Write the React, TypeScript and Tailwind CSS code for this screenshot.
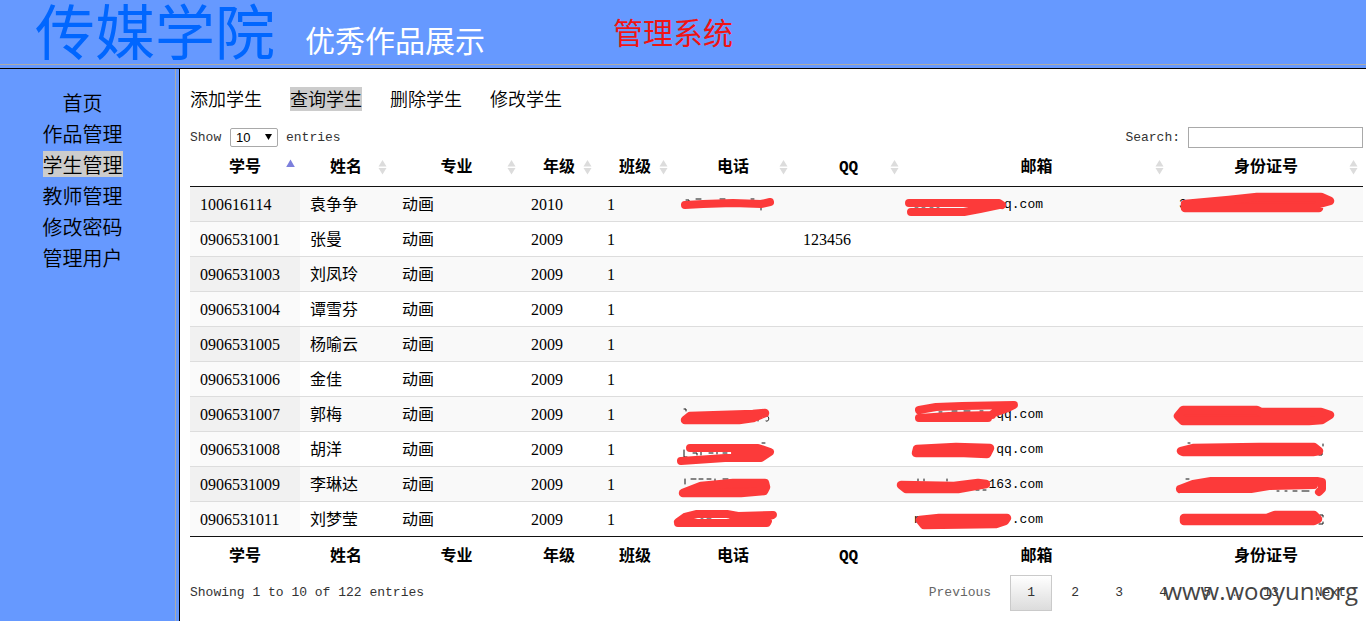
import React from "react";

type Mark = { fill?: string; lines?: string; ticks?: string; lead?: string; tail?: string };

type Student = {
  id: string;
  name: string;
  major: string;
  grade: string;
  cls: string;
  qq?: string;
  phone?: Mark;
  mail?: Mark;
  card?: Mark;
};

const students: Student[] = [
  {
    id: "100616114", name: "袁争争", major: "动画", grade: "2010", cls: "1",
    phone: { lines: "M12 18 L30 17 L60 16 L88 17 L97 15", ticks: "M13 13h3v2 M23 12h5 M47 12h5 M78 12h3 M88 20v3" },
    mail: {
      lines: "M5 16 L95 16 L98 18 M7 25 L60 25 L76 22 L95 18",
      ticks: "M11 20h3 M18 20h3 M26 20h3 M33 20h2",
      tail: "q.com",
    },
    card: { fill: "M16 17 L60 13 L88 10 L152 10 L161 14 L150 17 L150 21 L16 21 Z", lead: "3" },
  },
  { id: "0906531001", name: "张曼", major: "动画", grade: "2009", cls: "1", qq: "123456" },
  { id: "0906531003", name: "刘凤玲", major: "动画", grade: "2009", cls: "1" },
  { id: "0906531004", name: "谭雪芬", major: "动画", grade: "2009", cls: "1" },
  { id: "0906531005", name: "杨喻云", major: "动画", grade: "2009", cls: "1" },
  { id: "0906531006", name: "金佳", major: "动画", grade: "2009", cls: "1" },
  {
    id: "0906531007", name: "郭梅", major: "动画", grade: "2009", cls: "1",
    phone: { fill: "M12 23 L17 19 L80 17 L92 16 L80 21 L66 23 Z", ticks: "M11 12h2v2 M85 23v1 M91 19c6-3 6 7 2 5" },
    mail: {
      lines: "M15 13 L32 10 L58 9 L110 8 L104 11 L90 16 L84 20 M15 21 L45 19 L88 18 M15 21 L84 21",
      ticks: "M35 15h3 M48 14h5 M60 14h6 M76 14h3",
      tail: "qq.com",
    },
    card: { fill: "M14 13 L88 13 L92 15 L152 15 L161 18 L153 23 L140 24 L14 24 L9 19 Z" },
  },
  {
    id: "0906531008", name: "胡洋", major: "动画", grade: "2009", cls: "1",
    phone: {
      lines: "M17 16 L85 16 L97 20 L88 26 L52 26 L8 29 M62 21 L92 21",
      ticks: "M11 18v7h3 M20 21h4v2 M28 20v3 M36 21h4 M44 20v2 M50 21h4 M89 11h3",
    },
    mail: { fill: "M13 17 L12 21 L60 21 L83 22 L86 16 L52 15 Z", tail: "qq.com" },
    card: { fill: "M12 19 L24 16 L90 15 L145 15 L150 19 L144 20 L14 20 Z", ticks: "M19 11h2 M154 12v2 M150 23h3v-2" },
  },
  {
    id: "0906531009", name: "李琳达", major: "动画", grade: "2009", cls: "1",
    phone: { fill: "M10 26 L28 19 L60 16 L92 16 L93 20 L91 24 L68 26 Z", ticks: "M12 12v5 M18 12h5 M26 12h4 M34 12h4 M42 12v3 M50 12h5" },
    mail: { fill: "M-3 18 L50 19 L74 16 L82 17 L54 22 L2 22 Z", ticks: "M14 12v2 M20 12v2 M43 12v2 M62 23h4 M72 23h3 M79 23h3", tail: "163.com" },
    card: {
      lines: "M11 22 L24 17 L42 14 L148 14 L153 15 L153 22 L150 25 M11 22 L82 22 L100 19 L145 18",
      ticks: "M17 12h3 M42 18h3 M50 18h3 M65 18h5 M73 18h4 M108 24h2 M116 24h2 M124 24h4 M133 24h7",
    },
  },
  {
    id: "0906531011", name: "刘梦莹", major: "动画", grade: "2009", cls: "1",
    phone: { lines: "M5 20 L12 15 L24 12 L54 12 L65 14 L100 13 L88 17 L64 18 L95 19 L94 21 L5 21 M60 17 L92 17", ticks: "M28 17h2 M34 17h4" },
    mail: { fill: "M16 18 L35 16 L103 16 L101 19 L92 22 L20 23 Z", lead: "n", tail: ".com" },
    card: { fill: "M15 16 L98 16 L106 13 L145 13 L149 17 L145 19 L15 19 Z", ticks: "M151 13h3v2 M150 22h4v-2" },
  },
];

const columns = [
  { label: "学号", width: "w-[110px]" },
  { label: "姓名", width: "w-[92px]" },
  { label: "专业", width: "w-[129px]" },
  { label: "年级", width: "w-[76px]" },
  { label: "班级", width: "w-[76px]" },
  { label: "电话", width: "w-[120px]" },
  { label: "QQ", width: "w-[111px]" },
  { label: "邮箱", width: "w-[265px]" },
  { label: "身份证号", width: "w-[194px]" },
];

const sideLinks = ["首页", "作品管理", "学生管理", "教师管理", "修改密码", "管理用户"];
const tabs = ["添加学生", "查询学生", "删除学生", "修改学生"];

function SortIcon({ active }: { active: boolean }) {
  return (
    <svg className="absolute right-[5px] top-[11px]" width="9" height="16" viewBox="0 0 9 16" aria-hidden="true">
      {active ? (
        <path d="M4.5 0.5 L8.8 8 H0.2 Z" fill="#7c7fdc" />
      ) : (
        <path d="M4.5 1 L8.5 7.5 H0.5 Z M0.5 9 H8.5 L4.5 15.5 Z" fill="#dcdcdc" />
      )}
    </svg>
  );
}

function Covered({ mark }: { mark?: Mark }) {
  if (!mark) return null;
  return (
    <>
      <span className="flex w-[129px] justify-between font-['Liberation_Mono',monospace] text-[13px]">
        <span>{mark.lead}</span>
        <span>{mark.tail}</span>
      </span>
      <svg className="absolute left-0 top-0 overflow-visible" width="120" height="34" strokeLinecap="round" strokeLinejoin="round" aria-hidden="true">
        {mark.ticks && <path d={mark.ticks} fill="none" stroke="#111" strokeWidth="1" />}
        {mark.fill && <path d={mark.fill} fill="#fc3a3a" stroke="#fc3a3a" strokeWidth="8.5" />}
        {mark.lines && <path d={mark.lines} fill="none" stroke="#fc3a3a" strokeWidth="8" />}
      </svg>
    </>
  );
}

function PageButton({ label, current, muted }: { label: string; current?: boolean; muted?: boolean }) {
  const look = current
    ? "border-[#cacaca] bg-linear-to-b from-white to-[#dcdcdc] text-[#333]"
    : muted
      ? "border-transparent text-[#666]"
      : "border-transparent text-[#333]";
  return (
    <button type="button" className={`h-9 min-w-[42px] border px-4 ${look}`}>
      {label}
    </button>
  );
}

export default function App() {
  return (
    <div className="relative flex min-h-screen flex-col bg-white font-['Liberation_Serif','Noto_Sans_CJK_SC',serif] text-base leading-[18px] text-black">
      <header className="border-b border-black bg-[#6699ff] pb-[3px] font-['Noto_Sans_CJK_SC',sans-serif]">
        <div className="flex h-[65px] items-start border-b border-[#aaa] pl-[35px]">
          <h1 className="text-[60px] leading-[58px] text-[#0066ff]">传媒学院</h1>
          <span className="ml-[30px] pt-6 text-[30px] leading-[30px] text-white">优秀作品展示</span>
          <span className="ml-32 pt-4 text-[30px] leading-[30px] text-[#f01414]">管理系统</span>
        </div>
      </header>

      <div className="flex flex-1">
        <aside className="flex w-[180px] shrink-0 border-r border-black bg-[#6699ff] pr-[3px]">
          <nav className="flex flex-1 flex-col items-center gap-[5px] border-r border-[#aaa] pr-2.5 pt-5 font-['Noto_Sans_CJK_SC',sans-serif] text-xl font-[350] leading-6">
            {sideLinks.map((label) => (
              <a key={label} href="#" className={`pt-0.5 ${label === "学生管理" ? "bg-[#ccc]" : ""}`}>
                {label}
              </a>
            ))}
          </nav>
        </aside>

        <main className="min-w-0 flex-1 pl-2.5 pr-[3px] pt-[18px]">
          <nav className="flex gap-7 font-['Noto_Sans_CJK_SC',sans-serif] text-lg font-[350] leading-[22px]">
            {tabs.map((label) => (
              <a key={label} href="#" className={`pb-0.5 ${label === "查询学生" ? "bg-[#ccc]" : ""}`}>
                {label}
              </a>
            ))}
          </nav>

          <div className="mt-4 flex h-[21px] items-center justify-between font-['Liberation_Mono',monospace] text-[13px] text-[#333]">
            <label className="flex items-center gap-2">
              <span className="w-8">Show</span>
              <span className="relative flex">
                <select defaultValue="10" className="h-[19px] w-12 appearance-none rounded-xs border border-[#a9a9a9] bg-white pl-[5px] font-['Liberation_Sans',sans-serif] text-[13px] leading-4 text-black">
                  <option>10</option>
                  <option>25</option>
                  <option>50</option>
                </select>
                <svg className="pointer-events-none absolute right-[6px] top-[6px]" width="7" height="6" viewBox="0 0 7 6" aria-hidden="true">
                  <path d="M0 0 H7 L3.5 6 Z" fill="#000" />
                </svg>
              </span>
              entries
            </label>
            <label className="flex items-center gap-2">
              Search:
              <input type="search" className="h-[21px] w-[175px] border border-[#a9a9a9] bg-white px-1" />
            </label>
          </div>

          <table className="w-full table-fixed border-separate border-spacing-0">
            <thead>
              <tr>
                {columns.map((c, i) => (
                  <th key={c.label} className={`relative border-b border-[#111] px-[18px] pb-[9px] pt-[11px] text-center font-['Liberation_Mono','Noto_Sans_CJK_SC',monospace] font-bold ${c.width}`}>
                    {c.label}
                    <SortIcon active={i === 0} />
                  </th>
                ))}
              </tr>
            </thead>
            <tbody>
              {students.map((s, i) => {
                const cell = `relative px-2.5 pb-[7px] pt-[9px] ${i > 0 ? "border-t border-[#ddd]" : ""}`;
                return (
                  <tr key={s.id} className={i % 2 === 0 ? "h-[34px] bg-[#f9f9f9]" : "h-[35px] bg-white"}>
                    <td className={`${cell} ${i % 2 === 0 ? "bg-[#f1f1f1]" : "bg-[#fafafa]"}`}>{s.id}</td>
                    <td className={cell}>{s.name}</td>
                    <td className={cell}>{s.major}</td>
                    <td className={cell}>{s.grade}</td>
                    <td className={cell}>{s.cls}</td>
                    <td className={cell}><Covered mark={s.phone} /></td>
                    <td className={cell}>{s.qq}</td>
                    <td className={cell}><Covered mark={s.mail} /></td>
                    <td className={cell}><Covered mark={s.card} /></td>
                  </tr>
                );
              })}
            </tbody>
            <tfoot>
              <tr>
                {columns.map((c) => (
                  <th key={c.label} className="border-t border-[#111] px-[18px] pb-[5px] pt-[11px] text-center font-['Liberation_Mono','Noto_Sans_CJK_SC',monospace] font-bold">
                    {c.label}
                  </th>
                ))}
              </tr>
            </tfoot>
          </table>

          <div className="mt-1 flex h-9 items-center justify-between font-['Liberation_Mono',monospace] text-[13px] text-[#333]">
            <p>Showing 1 to 10 of 122 entries</p>
            <div className="flex items-center gap-0.5">
              <PageButton label="Previous" muted />
              <PageButton label="1" current />
              <PageButton label="2" />
              <PageButton label="3" />
              <PageButton label="4" />
              <PageButton label="5" />
              <span className="w-3.5 text-center">…</span>
              <PageButton label="13" />
              <PageButton label="Next" />
            </div>
          </div>
        </main>
      </div>

      <div className="pointer-events-none absolute bottom-3.5 right-2 font-['Open_Sans',sans-serif] text-2xl leading-8 text-[#444]">
        www.wooyun.org
      </div>
    </div>
  );
}
